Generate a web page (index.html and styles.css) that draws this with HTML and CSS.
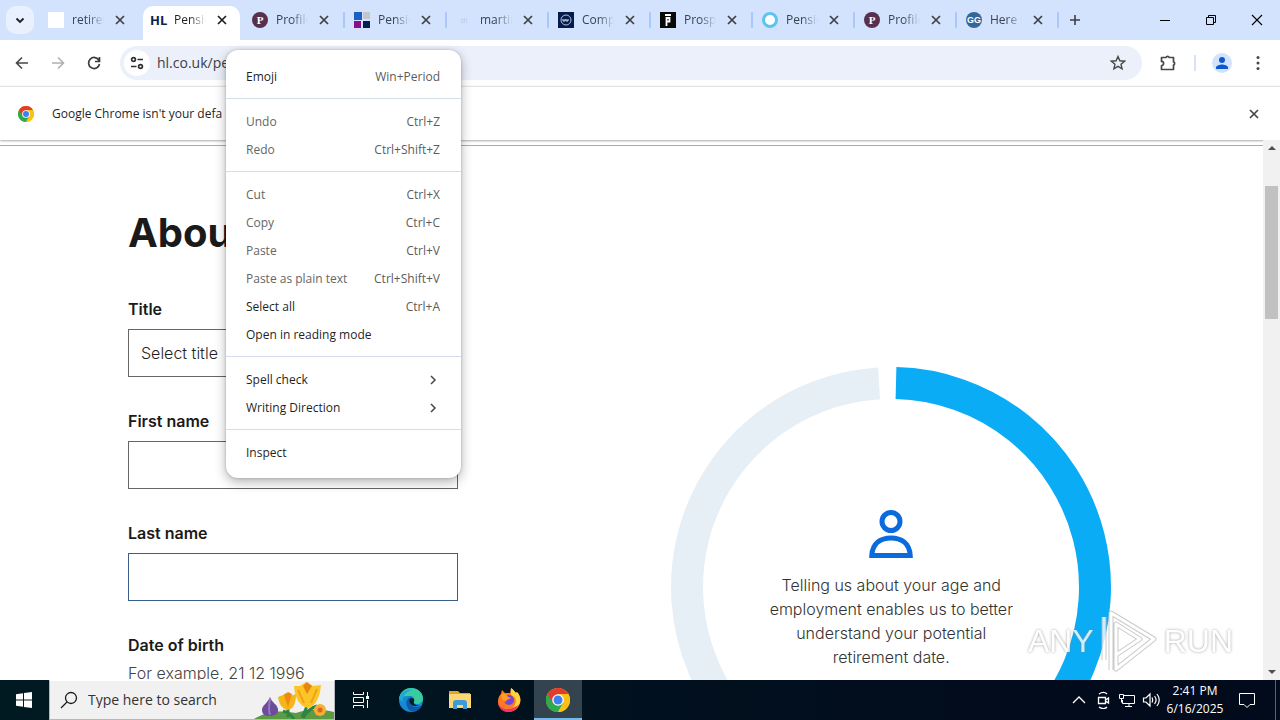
FILE: index.html
```html
<!DOCTYPE html>
<html lang="en">
<head>
<meta charset="utf-8">
<title>Pension calculator</title>
<link rel="stylesheet" href="styles.css">
</head>
<body>
<svg class="defs" aria-hidden="true">
  <symbol id="x" viewBox="0 0 16 16"><path d="M4 4l8 8M12 4l-8 8" fill="none" stroke="currentColor" stroke-width="1.7"/></symbol>
  <symbol id="chev" viewBox="0 0 12 12"><path d="M4 2l4 4-4 4" fill="none" stroke="currentColor" stroke-width="1.5"/></symbol>
  <symbol id="chrome" viewBox="0 0 24 24">
    <circle cx="12" cy="12" r="12" fill="#fbc116"/>
    <path d="M12 12L1.6 6A12 12 0 0 0 12 24l5.2-9z" fill="#2da94f"/>
    <path d="M1.6 6A12 12 0 0 1 22.4 6H12l-5.2 9z" fill="#e33b2e"/>
    <path d="M12 6h10.4A12 12 0 0 1 12 24l5.2-9z" fill="#fbc116"/>
    <circle cx="12" cy="12" r="5.8" fill="#fff"/><circle cx="12" cy="12" r="4.5" fill="#3b82f0"/>
  </symbol>
</svg>

<header class="tabstrip">
  <button class="tab-search" aria-label="Search tabs"><svg width="12" height="12" viewBox="0 0 12 12"><path d="M2.5 4.500L6 8l3.500-3.500" fill="none" stroke="#1f1f1f" stroke-width="1.800"/></svg></button>
  <nav class="tabs">
    <div class="tab"><span class="icon blank"></span><span class="tab-title">retirem</span><button class="tab-close" aria-label="Close"><svg><use href="#x"/></svg></button></div>
    <div class="tab active"><span class="icon hl">HL</span><span class="tab-title">Pension</span><button class="tab-close" aria-label="Close"><svg><use href="#x"/></svg></button></div>
    <div class="tab"><span class="icon plum">P</span><span class="tab-title">Profile</span><button class="tab-close" aria-label="Close"><svg><use href="#x"/></svg></button></div>
    <div class="tab split"><svg class="icon" viewBox="0 0 16 16"><path fill="#1b5fc4" d="M0 0h8v8H0z"/><path fill="#c4c6cc" d="M9 0h7v7H9z"/><path fill="#870e8c" d="M0 9h7v7H0z"/><path fill="#03204f" d="M9 9h7v7H9z"/></svg><span class="tab-title">Pension</span><button class="tab-close" aria-label="Close"><svg><use href="#x"/></svg></button></div>
    <div class="tab split"><span class="icon faint">di</span><span class="tab-title">martin</span><button class="tab-close" aria-label="Close"><svg><use href="#x"/></svg></button></div>
    <div class="tab split"><svg class="icon" viewBox="0 0 16 16"><path fill="#061b4d" d="M0 0h16v16H0z"/><circle cx="8" cy="8" r="5" fill="none" stroke="#b5c3dd"/><path d="M5 7v2h2V7m1 0v2h2V7" fill="none" stroke="#dfe6f3"/></svg><span class="tab-title">Comp</span><button class="tab-close" aria-label="Close"><svg><use href="#x"/></svg></button></div>
    <div class="tab split"><svg class="icon" viewBox="0 0 16 16"><path fill="#090909" d="M0 0h16v16H0z"/><path d="M5 3h6M6.500 14V6h3v3.500h-3" fill="none" stroke="#fff" stroke-width="1.800"/></svg><span class="tab-title">Prospe</span><button class="tab-close" aria-label="Close"><svg><use href="#x"/></svg></button></div>
    <div class="tab split"><svg class="icon" viewBox="0 0 16 16"><circle cx="8" cy="8" r="6.500" fill="#fff" stroke="#5cc4ee" stroke-width="3"/></svg><span class="tab-title">Pension</span><button class="tab-close" aria-label="Close"><svg><use href="#x"/></svg></button></div>
    <div class="tab split"><span class="icon plum">P</span><span class="tab-title">Profile</span><button class="tab-close" aria-label="Close"><svg><use href="#x"/></svg></button></div>
    <div class="tab split"><span class="icon gg">GG</span><span class="tab-title">Here i</span><button class="tab-close" aria-label="Close"><svg><use href="#x"/></svg></button></div>
    <div class="tab-new split"><button class="tab-close" aria-label="New tab"><svg viewBox="0 0 16 16"><path d="M8 3v10M3 8h10" stroke="#3c4043" stroke-width="1.600"/></svg></button></div>
  </nav>
  <div class="window-buttons">
    <button aria-label="Minimize"><svg viewBox="0 0 12 12"><path d="M1 6.500h10" stroke="#000"/></svg></button>
    <button aria-label="Restore"><svg viewBox="0 0 12 12"><path d="M1.500 3.500h7v7h-7zM3.500 3.500v-2h7v7h-2" fill="none" stroke="#000"/></svg></button>
    <button aria-label="Close window"><svg viewBox="0 0 12 12"><path d="M1 1l10 10M11 1L1 11" stroke="#000" stroke-width="1.100"/></svg></button>
  </div>
</header>

<div class="toolbar">
  <button class="tool" aria-label="Back"><svg viewBox="0 0 16 16"><path d="M14 8H3M8 2.500L2.500 8 8 13.500" fill="none" stroke="#474747" stroke-width="1.600"/></svg></button>
  <button class="tool" aria-label="Forward"><svg viewBox="0 0 16 16"><path d="M2 8h11M8 2.500L13.500 8 8 13.500" fill="none" stroke="#b0b0b0" stroke-width="1.600"/></svg></button>
  <button class="tool" aria-label="Reload"><svg viewBox="0 0 16 16"><path d="M13 5.500A5.500 5.500 0 1 0 13.500 9M13.500 2v4.500H9" fill="none" stroke="#3c3c3c" stroke-width="1.700"/></svg></button>
  <div class="omnibox">
    <button class="site-info" aria-label="Site information"><svg viewBox="0 0 16 16"><g fill="none" stroke="#303134" stroke-width="1.700"><circle cx="4.500" cy="4.500" r="1.900"/><path d="M8.500 4.500H14M2 11.500h5.500"/><circle cx="11.500" cy="11.500" r="1.900"/></g></svg></button>
    <input class="url" aria-label="Address" value="hl.co.uk/pe">
    <button class="star" aria-label="Bookmark"><svg viewBox="0 0 16 16"><path d="M8 1.500l1.900 4.300 4.700.4-3.600 3.100 1.100 4.600L8 11.400l-4.100 2.500L5 9.300 1.400 6.200l4.700-.4z" fill="none" stroke="#474747" stroke-width="1.400"/></svg></button>
  </div>
  <button class="tool ext" aria-label="Extensions"><svg viewBox="0 0 18 18"><path d="M2.500 3.500h4.500a1.700 1.700 0 0 1 3.200 0h4.300v4.400a1.700 1.700 0 0 1 0 3.200v4.400h-12v-3.900a2.100 2.100 0 0 0 0-4.200z" fill="none" stroke="#474747" stroke-width="1.700" stroke-linejoin="round"/></svg></button>
  <span class="tool-line"></span>
  <button class="profile" aria-label="Profile"><svg viewBox="0 0 20 20"><circle cx="10" cy="10" r="10" fill="#d3e3fd"/><circle cx="10" cy="7" r="3" fill="#0b57d0"/><path d="M4 16v-1.500c0-2 4-3 6-3s6 1 6 3V16z" fill="#0b57d0"/></svg></button>
  <button class="tool" aria-label="Menu"><svg viewBox="0 0 16 16" fill="#474747"><circle cx="8" cy="2.500" r="1.500"/><circle cx="8" cy="8" r="1.500"/><circle cx="8" cy="13.500" r="1.500"/></svg></button>
</div>

<div class="infobar">
  <svg width="16" height="16"><use href="#chrome"/></svg>
  <span class="info-text">Google Chrome isn't your defa</span>
  <button class="info-close" aria-label="Dismiss"><svg><use href="#x"/></svg></button>
</div>

<div class="viewport">
  <main class="page">
    <form class="form">
      <h1>Abou</h1>
      <div class="field"><label for="title">Title</label><select id="title"><option>Select title</option></select></div>
      <div class="field"><label for="first">First name</label><input id="first" type="text"></div>
      <div class="field"><label for="last">Last name</label><input id="last" class="hover" type="text"></div>
      <div class="field"><span class="label">Date of birth</span><span class="hint">For example, 21 12 1996</span></div>
    </form>
    <aside class="progress">
      <div class="ring">
        <svg class="ring-art" viewBox="0 0 440 440"><g fill="none" stroke-width="32"><path d="M225 16.100A204 204 0 0 1 322 396.700" stroke="#0aacf5"/><path d="M208 16.400A204 204 0 0 0 118 396.700" stroke="#e6eef6"/></g></svg>
        <div class="ring-content">
          <svg width="44" height="48" viewBox="0 0 44 48"><g fill="none" stroke="#0a6bde" stroke-width="5"><circle cx="22" cy="11.500" r="9"/><path d="M2.800 45.500C3.500 33 12 28 22 28s18.500 5 19.200 17.500z"/></g></svg>
          <p>Telling us about your age and employment enables us to better understand your potential retirement date.</p>
        </div>
      </div>
    </aside>
  </main>
  <div class="scrollbar"><svg viewBox="0 0 8 4"><path d="M0 4l4-4 4 4z" fill="#505050"/></svg><span class="thumb"></span><svg viewBox="0 0 8 4"><path d="M0 0l4 4 4-4z" fill="#505050"/></svg></div>
  <div class="watermark"><span>ANY</span><svg width="60" height="66" viewBox="0 0 60 66"><g fill="none" stroke-linejoin="round"><path d="M5 52V9M12 62V5l43 26-38 30V16l24 15-24 16V28" stroke="#bdbdbd" stroke-width="5"/><path d="M5 52V9M12 62V5l43 26-38 30V16l24 15-24 16V28" stroke="#fff" stroke-width="3"/></g></svg><span>RUN</span></div>
</div>

<footer class="taskbar">
  <button class="task" aria-label="Start"><svg width="16" height="16" viewBox="0 0 16 16"><path d="M0 2.300l7-1V7.600H0zM8 1.100L16 0v7.600H8zM0 8.500h7v6.300l-7-1zM8 8.500h8V16l-8-1.100z" fill="#fff"/></svg></button>
  <div class="search">
    <svg width="18" height="18" viewBox="0 0 18 18"><g fill="none" stroke="#1c1c1c" stroke-width="1.300"><circle cx="11" cy="7" r="5.500"/><path d="M7 11l-6 6"/></g></svg>
    <input type="text" aria-label="Search" placeholder="Type here to search">
    <svg class="flowers" width="80" height="38" viewBox="0 0 80 38">
      <path d="M0 38c12-8 28-9 42-6 12-4 26-4 38-1v7z" fill="#5d9a45"/>
      <path d="M16 16c-2 6-8 8-8 13s4 6 8 6 9-2 8-7-6-6-8-12z" fill="#6d4c9c"/><path d="M16 18c-1 7-2 11 0 16" stroke="#9578bd" stroke-width="2" fill="none"/>
      <path d="M34 26v10M53 22c0 7-3 10-5 14M40 38c-5-7-8-7-11-8M49 37c5-8 10-11 14-12" stroke="#2f8444" stroke-width="3" fill="none"/>
      <path d="M24 16l5-2 3-2 4 3 6-2c0 8-2 15-8 16-6-1-9-6-10-13z" fill="#f7b51b"/><path d="M30 14l4 12 4-13-4-2z" fill="#ee8a0c"/>
      <path d="M40 5l6 0 6-4 7 4 8-1c-1 12-5 21-13 23-9-2-13-10-14-22z" fill="#fcc526"/><path d="M49 5l4 8 5-8-5-4z" fill="#e98511"/><path d="M44 9l6 13M63 8l-6 14" fill="none" stroke="#efa31c" stroke-width="2"/>
      <circle cx="66" cy="29" r="6" fill="#f8ad3a"/><circle cx="66" cy="29" r="2.500" fill="#da6712"/>
    </svg>
  </div>
  <button class="task task-view" aria-label="Task view"><svg width="16" height="16" viewBox="0 0 16 16"><path d="M.5 0v2.500h10V0M.5 5.500h10v5H.5zM.5 16v-2.500h10V16M14.500 0v4M14.500 8v8" fill="none" stroke="#fff"/><path d="M13 4h3v3h-3z" fill="#fff"/></svg></button>
  <button class="task" aria-label="Edge"><svg width="24" height="24" viewBox="0 0 24 24"><circle cx="12" cy="12" r="12" fill="#1688d4"/><path d="M0 11C1 4 6 0 12 0c7 0 12 5 12 10 0 4-3 6-6 6s-4-1-3-3c1-3-1-5-4-5-4 0-9 0-11 3z" fill="#37cda0"/><path d="M0 11C2 3 8 1 13 2c-6 2-10 6-9 12z" fill="#20a7d8"/><path d="M13 9c-4 0-7 4-5 9 1 4 4 6 7 5 4 0 7-3 8-6-6 4-12 1-12-3 0-2 1-4 2-5z" fill="#0d5aa9"/><path d="M12 10c-2 1-2 3-1 5 1 3 6 4 9 2-2 0-5 0-5-2-1-1 1-2 0-4-1-1-2-1-3-1z" fill="#021b2e"/></svg></button>
  <button class="task" aria-label="File Explorer"><svg width="22" height="20" viewBox="0 0 22 20"><path d="M0 1h9l2 2h10v15H0z" fill="#e9a323"/><path d="M0 4h22v14H0z" fill="#fbd775"/><path d="M4 19v-6c0-2 1-3 3-3h8c2 0 3 1 3 3v6h-4v-4H8v4z" fill="#3d9bd8"/></svg></button>
  <button class="task" aria-label="Firefox"><svg width="24" height="24" viewBox="0 0 24 24"><path d="M5 2l3 3 5 0 1-5c3 2 4 4 5 5l1-1c3 3 4 7 3 11-1 5-6 9-11 9S1 20 1 14c0-4 1-6 3-8z" fill="#ff7a1f"/><path d="M14 0c3 2 4 4 5 5l1-1c3 3 4 7 3 11-2 3-4 4-7 4 5-5 3-10-2-12z" fill="#ffd43a"/><path d="M1 14c1 5 6 8 11 7 4 0 7-2 9-4-2 5-6 7-10 7C5 24 1 19 1 14z" fill="#f5306c"/><circle cx="12" cy="12" r="5" fill="#7547d4"/><path d="M4 6c3-1 6 0 7 3l3 1c-2 2-5 1-5 4-3-1-5-4-5-8z" fill="#ff9b22"/></svg></button>
  <button class="task current" aria-label="Chrome"><svg width="24" height="24"><use href="#chrome"/></svg></button>
  <div class="tray">
    <button aria-label="Hidden icons"><svg viewBox="0 0 18 18"><path d="M3 12l6-6 6 6" fill="none" stroke="#fff" stroke-width="1.300"/></svg></button>
    <button aria-label="Meet now"><svg viewBox="0 0 18 18"><path d="M4.500 6.500h7v6h-7zM11.500 9l3-2v5l-3-2M5 3c3-2 6-2 8 0M5 16c3 2 6 2 8 0" fill="none" stroke="#fff" stroke-width="1.300"/></svg></button>
    <button aria-label="Network"><svg viewBox="0 0 18 18"><path d="M6 4.500h10.500v8H4.500V9M11 12.500v3M7 15.500h7M1.500 3.500h4v4h-4zM3.500 7.500v4" fill="none" stroke="#fff"/></svg></button>
    <button aria-label="Volume"><svg viewBox="0 0 18 18"><path d="M1.500 7v4H4l4 4V3L4 7zM10 6.500c1 2 1 3 0 5M12.500 5c2 2.500 2 5.500 0 8M15 3c3 4 3 8 0 12" fill="none" stroke="#fff" stroke-width="1.200"/></svg></button>
  </div>
  <div class="clock"><span>2:41 PM</span><span>6/16/2025</span></div>
  <button class="notify" aria-label="Notifications"><svg width="16" height="16" viewBox="0 0 16 16"><path d="M.5 1.500h15v11H11l-3 3-3-3H.5z" fill="none" stroke="#fff"/></svg></button>
  <span class="peek"></span>
</footer>

<div class="menu" role="menu">
  <button class="item"><span>Emoji</span><kbd>Win+Period</kbd></button>
  <hr>
  <button class="item" disabled><span>Undo</span><kbd>Ctrl+Z</kbd></button>
  <button class="item" disabled><span>Redo</span><kbd>Ctrl+Shift+Z</kbd></button>
  <hr>
  <button class="item" disabled><span>Cut</span><kbd>Ctrl+X</kbd></button>
  <button class="item" disabled><span>Copy</span><kbd>Ctrl+C</kbd></button>
  <button class="item" disabled><span>Paste</span><kbd>Ctrl+V</kbd></button>
  <button class="item" disabled><span>Paste as plain text</span><kbd>Ctrl+Shift+V</kbd></button>
  <button class="item"><span>Select all</span><kbd>Ctrl+A</kbd></button>
  <button class="item"><span>Open in reading mode</span></button>
  <hr>
  <button class="item"><span>Spell check</span><svg><use href="#chev"/></svg></button>
  <button class="item"><span>Writing Direction</span><svg><use href="#chev"/></svg></button>
  <hr>
  <button class="item"><span>Inspect</span></button>
</div>
</body>
</html>
```
FILE: styles.css
```css
* { box-sizing: border-box; }
html, body { height: 100%; }
body {
  margin: 0;
  display: flex;
  flex-direction: column;
  position: relative;
  overflow: hidden;
  background: #fff;
  font: 12px/16px "Open Sans", "Noto Sans", sans-serif;
  color: #1f1f1f;
}
button {
  border: 0;
  padding: 0;
  margin: 0;
  background: none;
  font: inherit;
  color: inherit;
  display: flex;
  align-items: center;
  justify-content: center;
}
input, select { font: inherit; color: inherit; min-width: 0; }
svg { flex: none; display: block; }
.defs { position: absolute; width: 0; height: 0; }

/* Tab strip */
.tabstrip { flex: none; height: 40px; display: flex; align-items: center; background: #d3e3fd; }
.tab-search { width: 28px; height: 28px; margin: 0 6px; border-radius: 10px; background: #e9f1fe; }
.tabs { flex: 1; display: flex; align-self: stretch; min-width: 0; }
.tab {
  position: relative;
  flex: 0 1 102px;
  min-width: 0;
  display: flex;
  align-items: center;
  gap: 8px;
  padding: 0 14px 0 8px;
}
.icon { flex: none; width: 16px; height: 16px; }
.blank { background: #fff; }
.hl { font: bold 13px/16px "Open Sans", sans-serif; color: #0d2344; }
.faint { font-size: 8px; text-align: center; color: #b9cbe8; }
.plum, .gg { border-radius: 50%; text-align: center; color: #fff; }
.plum { background: #57304f; font: bold 11px/16px "Liberation Serif", serif; }
.gg { background: #33679b; font: bold 9px/16px "Liberation Sans", sans-serif; }
.tab-title {
  flex: 1;
  min-width: 0;
  overflow: hidden;
  white-space: nowrap;
  color: #3a4252;
  -webkit-mask-image: linear-gradient(90deg, #000 50%, transparent);
  mask-image: linear-gradient(90deg, #000 50%, transparent);
}
.tab-close { width: 16px; height: 16px; color: #3c4043; }
.tab-close svg { width: 16px; height: 16px; }
.active::before {
  content: "";
  position: absolute;
  inset: 6px 4px 0 1px;
  border-radius: 10px 10px 0 0;
  background: #fff;
}
.active > * { position: relative; }
.active .tab-close, .active .tab-title { color: #1f1f1f; }
.split::before {
  content: "";
  position: absolute;
  left: -3px;
  top: 12px;
  width: 2px;
  height: 16px;
  border-radius: 1px;
  background: #a8c7fa;
}
.tab-new { position: relative; display: flex; align-items: center; padding-left: 7px; }
.window-buttons { display: flex; align-self: stretch; }
.window-buttons button { width: 46px; }
.window-buttons svg { width: 12px; height: 12px; }

/* Toolbar */
.toolbar { flex: none; height: 46px; display: flex; align-items: center; padding: 0 4px; background: #fff; }
.tool { width: 36px; height: 36px; }
.tool svg { width: 16px; height: 16px; }
.omnibox {
  flex: 1;
  display: flex;
  align-items: center;
  height: 34px;
  margin: 0 8px;
  padding: 0 16px 0 4px;
  border-radius: 17px;
  background: #ecf0fa;
}
.site-info { width: 26px; height: 26px; border-radius: 50%; background: #fff; }
.site-info svg, .star svg { width: 16px; height: 16px; }
.url { flex: 1; padding: 0; margin-left: 7px; border: 0; background: none; outline: 0; font-size: 14px; color: #3c4043; }
.ext svg { width: 18px; height: 18px; }
.tool-line { width: 2px; height: 16px; margin: 0 16px 0 8px; background: #d5e2f8; }
.profile { margin-right: 8px; }
.profile svg { width: 20px; height: 20px; }

.infobar {
  position: relative;
  flex: none;
  height: 54px;
  display: flex;
  align-items: center;
  gap: 18px;
  padding: 0 18px;
  border-top: 1px solid #e1e3e8;
  background: #fff;
  box-shadow: 0 1px 2px #aaa;
}
.info-text { flex: 1; }
.info-close { color: #474747; }
.info-close svg { width: 16px; height: 16px; }

/* Web page */
.viewport { position: relative; flex: 1; min-height: 0; display: flex; font-family: Inter, sans-serif; font-size: 16px; line-height: 24px; }
.page {
  flex: 1;
  min-width: 0;
  margin-top: 5px;
  border-top: 1px solid #ababab;
  padding: 63px 128px 0;
  display: grid;
  grid-template-columns: 1fr 1fr;
  gap: 32px;
  align-items: start;
  overflow: hidden;
}
.form { max-width: 330px; }
h1 { margin: 0 0 40px; font-size: 40px; line-height: 48px; font-weight: 700; color: #1a1a1a; }
.field { display: flex; flex-direction: column; margin-bottom: 32px; }
.field label, .label { font-weight: 600; color: #1a1a1a; }
.field input, .field select {
  height: 48px;
  margin-top: 8px;
  padding: 0 12px;
  border: 1px solid #666;
  border-radius: 0;
  outline: 0;
  background: #fff;
  font-weight: 300;
  appearance: none;
}
.field .hover { border-color: #3a5f8a; }
.hint { margin-top: 4px; font-weight: 300; color: #444; }
.progress { display: flex; justify-content: center; padding-top: 158px; }
.ring { display: grid; }
.ring > * { grid-area: 1 / 1; }
.ring-art { width: 440px; height: 440px; }
.ring-content { display: flex; flex-direction: column; align-items: center; padding: 143px 80px 0; }
.ring-content p { width: 256px; margin: 15px 0 0; text-align: center; font-weight: 300; color: #333; }

.scrollbar { width: 17px; display: flex; flex-direction: column; align-items: center; padding: 6px 0; background: #f1f1f1; }
.scrollbar svg { width: 8px; height: 4px; }
.thumb { width: 13px; height: 133px; margin: 36px 0 auto; background: #c1c1c1; }

.watermark {
  position: absolute;
  right: 47px;
  bottom: 6px;
  display: flex;
  align-items: center;
  gap: 5px;
  opacity: 0.8;
  font: 32px/40px "Liberation Sans", sans-serif;
  color: #fff;
  text-shadow: 0 0 3px #888;
}

/* Taskbar */
.taskbar { flex: none; height: 40px; display: flex; align-items: stretch; gap: 1px; background: linear-gradient(90deg, #001a22, #020b1c 80%); color: #fff; }
.task { width: 48px; }
.task-view { width: 50px; }
.search { flex: 0 1 286px; min-width: 0; display: flex; align-items: center; padding-left: 10px; border: 1px solid #b5b8ba; border-top-color: #fff; background: #f1f1f1; }
.search input { flex: 1; margin-left: 10px; padding: 0; border: 0; outline: 0; background: none; font-size: 14px; }
.search input::placeholder { color: #333; opacity: 1; }
.flowers { align-self: flex-end; }
.current { background: #34444f; box-shadow: inset 0 -2px #76b9ed; }
.tray { display: flex; margin-left: auto; }
.tray button { width: 24px; }
.tray svg { width: 18px; height: 18px; }
.clock { width: 62px; display: flex; flex-direction: column; justify-content: center; align-items: center; line-height: 18px; }
.notify { width: 40px; }
.peek { width: 1px; margin: 0 4px 0 7px; background: #5a626d; }

/* Context menu */
.menu {
  position: absolute;
  left: 226px;
  top: 50px;
  width: 235px;
  padding: 13px 0 11px;
  border-radius: 12px;
  background: #fff;
  box-shadow: 0 4px 12px rgba(0, 0, 0, 0.3), 0 0 3px rgba(0, 0, 0, 0.2);
}
.item { width: 100%; height: 28px; padding: 0 21px 0 20px; justify-content: space-between; }
.item kbd { font: inherit; color: #5c5c5c; }
.item:disabled { color: #666; }
.item svg { width: 12px; height: 12px; margin-right: 1px; color: #474747; }
.menu hr { height: 1px; margin: 7px 0 9px; border: 0; background: #d7dcec; }
```
